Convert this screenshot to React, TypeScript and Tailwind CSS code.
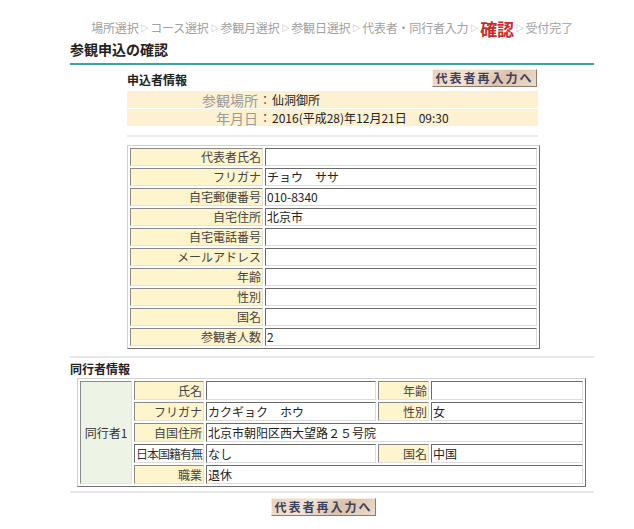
import React from 'react';

const font = "font-['Noto_Sans_CJK_JP','Noto_Sans',sans-serif]";

const steps = ['場所選択', 'コース選択', '参観月選択', '参観日選択', '代表者・同行者入力'];

const applicant: [string, string][] = [
  ['代表者氏名', ''],
  ['フリガナ', 'チョウ　ササ'],
  ['自宅郵便番号', '010-8340'],
  ['自宅住所', '北京市'],
  ['自宅電話番号', ''],
  ['メールアドレス', ''],
  ['年齢', ''],
  ['性別', ''],
  ['国名', ''],
  ['参観者人数', '2'],
];

const labelCell =
  'bg-[#fff5cc] border border-t-[#8a8a8a] border-l-[#8a8a8a] border-r-[#e2e2e2] border-b-[#e2e2e2] text-right text-[#444] px-[1px] whitespace-nowrap overflow-hidden';
const valueCell =
  'bg-white border border-t-[#6a6a6a] border-l-[#6a6a6a] border-r-[#dcdcdc] border-b-[#dcdcdc] text-left text-[#222] px-[1px] whitespace-nowrap overflow-hidden';

const row = 'h-[19px] leading-[17px]';

function ReenterButton() {
  return (
    <div className="w-[105px] h-[18px] flex items-center justify-center bg-[linear-gradient(135deg,#e8d2bd_0%,#f3e4d3_35%,#dcc2aa_65%,#ecdccb_100%)] border border-t-[#f7eee4] border-l-[#f7eee4] border-b-[#8d7b6b] border-r-[#8d7b6b] text-[12px] font-bold tracking-[2px] text-[#3d4262] leading-none">
      代表者再入力へ
    </div>
  );
}

export default function App() {
  return (
    <div className={`w-[634px] h-[529px] bg-white overflow-hidden ${font}`}>
      <div className="ml-[70px] w-[524px] pt-[19px]">
        {/* breadcrumb */}
        <div className="h-[18px] flex items-center justify-center text-[12px] text-[#a0a0a0] whitespace-nowrap tracking-[-0.2px]">
          {steps.map((s) => (
            <React.Fragment key={s}>
              <span>{s}</span>
              <span className="text-[8px] mx-[2px]">▷</span>
            </React.Fragment>
          ))}
          <span className="text-[17px] font-bold text-[#cc2a2a] leading-none">確認</span>
          <span className="text-[8px] mx-[2px]">▷</span>
          <span>受付完了</span>
        </div>

        <h1 className="mt-[3px] h-[18px] leading-[18px] text-[14px] font-bold text-[#222]">参観申込の確認</h1>
        <div className="mt-[5px] h-[2px] bg-[#3fa3a3]" />

        {/* applicant */}
        <div className="ml-[57px] w-[413px]">
          <div className="mt-[3px] h-[19px] flex items-center justify-between">
            <div className="text-[12px] font-bold text-[#222] pt-[4px]">申込者情報</div>
            <div className="mr-[3px]">
              <ReenterButton />
            </div>
          </div>
          <div className="mt-[4px] w-[411px] flex flex-col gap-[1px]">
            <div className="h-[17px] bg-[#fdf1d2] flex items-center leading-none">
              <span className="w-[131px] text-right text-[14px] leading-[14px] text-[#9a9a9a]">参観場所</span>
              <span className="w-[14px] text-center text-[12px] text-[#444]">：</span>
              <span className="text-[12px] text-[#222]">仙洞御所</span>
            </div>
            <div className="h-[17px] bg-[#fdf1d2] flex items-center leading-none">
              <span className="w-[131px] text-right text-[14px] leading-[14px] text-[#9a9a9a]">年月日</span>
              <span className="w-[14px] text-center text-[12px] text-[#444]">：</span>
              <span className="text-[12px] text-[#222]">2016(平成28)年12月21日　09:30</span>
            </div>
          </div>
          <div className="mt-[9px] w-[411px] h-[2px] bg-[#e6eded]" />

          <table className="mt-[8px] w-[413px] table-fixed border-separate border-spacing-[2px] border border-t-[#d0d0d0] border-l-[#d0d0d0] border-b-[#707070] border-r-[#707070] text-[12px]">
            <colgroup>
              <col className="w-[133px]" />
              <col />
            </colgroup>
            <tbody>
              {applicant.map(([k, v]) => (
                <tr key={k}>
                  <td className={`${labelCell} h-[18px] leading-[16px]`}>{k}</td>
                  <td className={`${valueCell} h-[18px] leading-[16px]`}>{v}</td>
                </tr>
              ))}
            </tbody>
          </table>
        </div>

        <div className="mt-[7px] h-[2px] bg-[#e8e8e8]" />

        {/* companions */}
        <div className="mt-[3px] h-[16px] leading-[16px] text-[12px] font-bold text-[#222]">同行者情報</div>
        <table className="mt-[1px] ml-[7px] w-[509px] table-fixed border-separate border-spacing-[2px] border border-t-[#d0d0d0] border-l-[#d0d0d0] border-b-[#707070] border-r-[#707070] text-[12px]">
          <colgroup>
            <col className="w-[52px]" />
            <col className="w-[70px]" />
            <col className="w-[170px]" />
            <col className="w-[51px]" />
            <col />
          </colgroup>
          <tbody>
            <tr>
              <td
                rowSpan={5}
                className="bg-[#edf3e5] border border-t-[#8a8a8a] border-l-[#8a8a8a] border-r-[#e2e2e2] border-b-[#e2e2e2] text-center text-[#333]"
              >
                同行者1
              </td>
              <td className={`${labelCell} ${row}`}>氏名</td>
              <td className={`${valueCell} ${row}`}></td>
              <td className={`${labelCell} ${row}`}>年齢</td>
              <td className={`${valueCell} ${row}`}></td>
            </tr>
            <tr>
              <td className={`${labelCell} ${row}`}>フリガナ</td>
              <td className={`${valueCell} ${row}`}>カクギョク　ホウ</td>
              <td className={`${labelCell} ${row}`}>性別</td>
              <td className={`${valueCell} ${row}`}>女</td>
            </tr>
            <tr>
              <td className={`${labelCell} ${row}`}>自国住所</td>
              <td colSpan={3} className={`${valueCell} ${row}`}>
                北京市朝阳区西大望路２５号院
              </td>
            </tr>
            <tr>
              <td className={`${valueCell} ${row} text-right text-[#333] tracking-[-1px] px-0`}>日本国籍有無</td>
              <td className={`${valueCell} ${row}`}>なし</td>
              <td className={`${labelCell} ${row}`}>国名</td>
              <td className={`${valueCell} ${row}`}>中国</td>
            </tr>
            <tr>
              <td className={`${labelCell} ${row}`}>職業</td>
              <td colSpan={3} className={`${valueCell} ${row}`}>
                退休
              </td>
            </tr>
          </tbody>
        </table>

        <div className="mt-[4px] h-[2px] bg-[#e8e8e8]" />

        <div className="mt-[5px] ml-[201px]">
          <ReenterButton />
        </div>
      </div>
    </div>
  );
}
